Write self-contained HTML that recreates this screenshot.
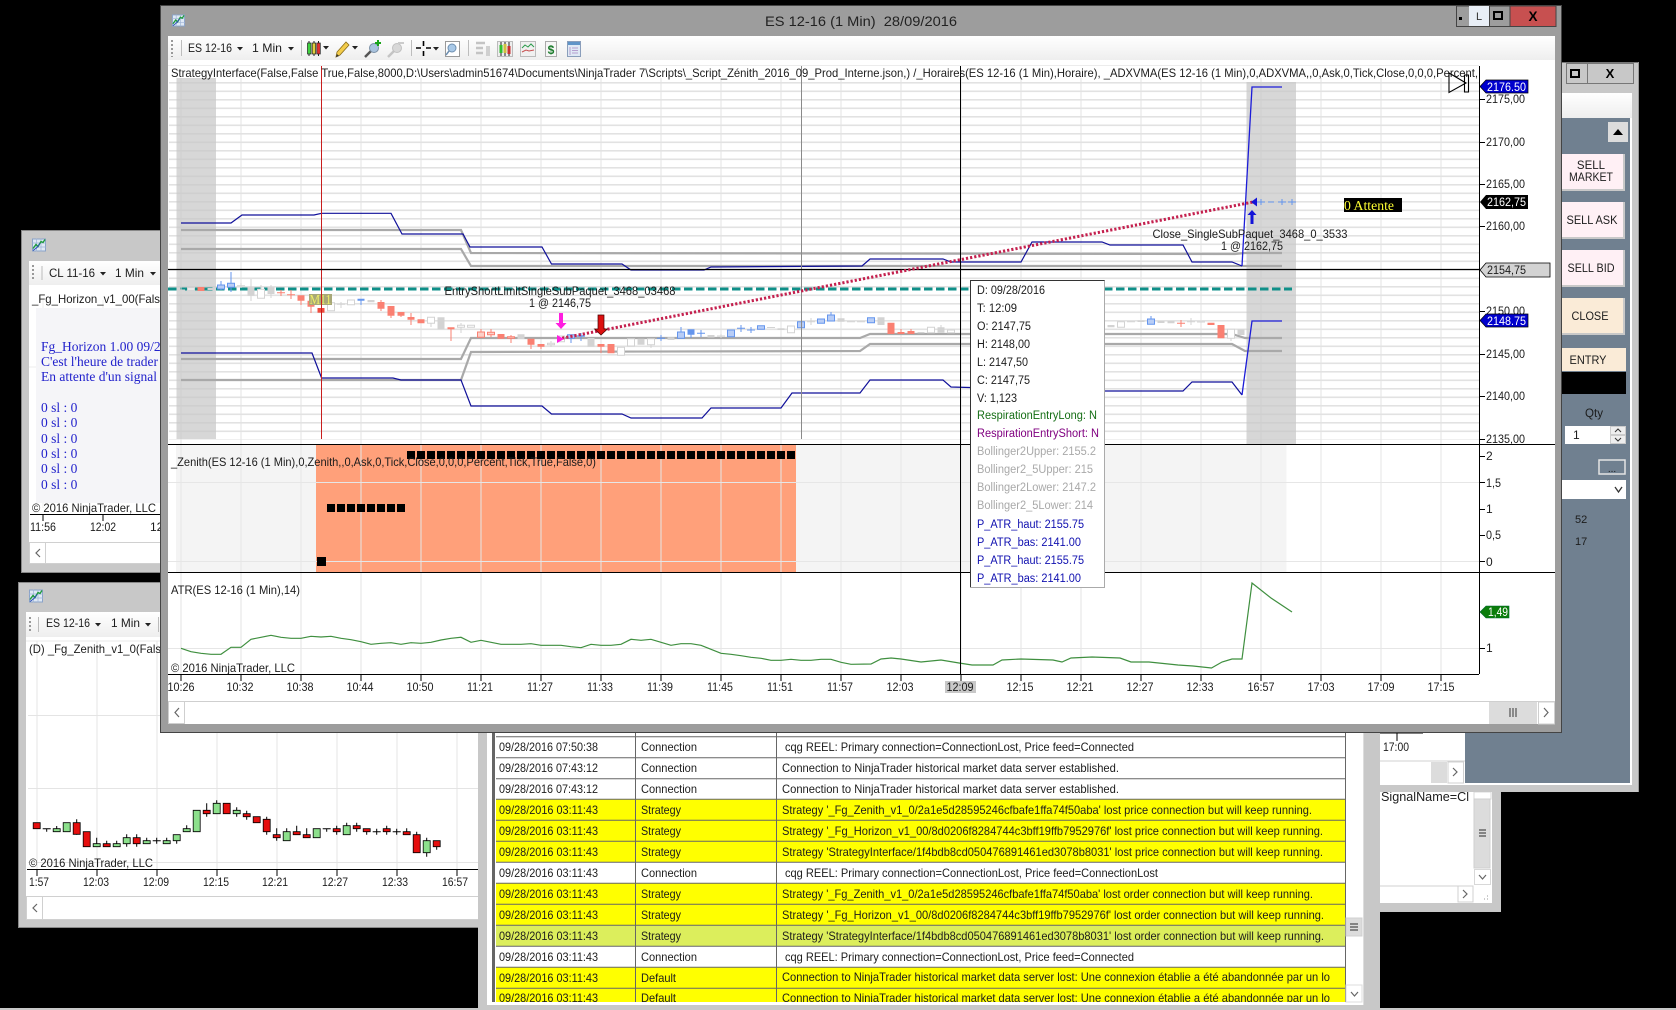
<!DOCTYPE html>
<html lang="fr"><head><meta charset="utf-8"><title>ES 12-16 (1 Min) 28/09/2016</title>
<style>
html,body{margin:0;padding:0;background:#000;width:1676px;height:1010px;overflow:hidden}
svg{display:block;font-family:"Liberation Sans",sans-serif;font-size:12px}
text{fill:#1c1c1c}
.s{font-family:"Liberation Serif",serif;font-size:13.5px;fill:#2222cc}
.t{font-size:11.6px}
.w{fill:#fff}
</style></head><body>
<svg width="1676" height="1010" viewBox="0 0 1676 1010" xmlns="http://www.w3.org/2000/svg">
<defs>
<linearGradient id="tb" x1="0" y1="0" x2="0" y2="1"><stop offset="0" stop-color="#fff"/><stop offset="1" stop-color="#eeeeee"/></linearGradient>
<pattern id="hg" x="0" y="14" width="20" height="8.5" patternUnits="userSpaceOnUse"><rect width="20" height="1.6" fill="#e2e2e2"/></pattern>
<symbol id="ai" viewBox="0 0 14 13"><rect x=".5" y=".5" width="13" height="12" fill="#dfe9f5" stroke="#8aa2c8"/><path d="M0 4.5h14M0 8.5h14M4.5 0v13M9 0v13" stroke="#9db3d6" stroke-width=".7"/><path d="M1 10l3-4 2 2 3-5 2 1 2-3" fill="none" stroke="#1d9b3c" stroke-width="1.4"/><path d="M1 12l4-3 3-4" fill="none" stroke="#2a4fb8" stroke-width="1"/></symbol>
</defs>
<rect width="1676" height="1010" fill="#000"/>
<rect x="0" y="1008" width="1676" height="2" fill="#c8c8c8"/>

<!-- window behind: signal -->
<rect x="1300" y="780" width="201" height="132" fill="#c8c8c8"/>
<rect x="1300" y="790" width="192" height="113" fill="#fff"/>
<text x="1381" y="801" font-size="12.5" textLength="88" lengthAdjust="spacingAndGlyphs">SignalName=Cl</text>
<rect x="1474" y="792" width="17" height="7" fill="#fff" stroke="#d8d8d8"/>
<rect x="1474" y="799" width="16" height="69" fill="#dcdcdc" stroke="#cfcfcf"/>
<path d="M1479 830h7M1479 833h7M1479 836h7" stroke="#666" stroke-width="1.4"/>
<rect x="1474.500" y="869.500" width="16" height="15" fill="#fff" stroke="#d8d8d8"/>
<path d="M1479 875l3.500 4 3.500-4" fill="none" stroke="#666" stroke-width="1.2"/>
<path d="M1300 886h173" stroke="#d0d0d0"/>
<rect x="1458" y="886" width="15" height="16" fill="#fff" stroke="#d0d0d0"/>
<path d="M1463 890l4 4-4 4" fill="none" stroke="#666" stroke-width="1.2"/>
<path d="M1484 899h1M1487 899h1M1487 896h1" stroke="#999"/>

<!-- right window -->
<rect x="1300" y="62" width="339" height="730" fill="#c8c8c8"/>
<rect x="1300" y="62" width="339" height="1" fill="#777"/>
<rect x="1638" y="62" width="1" height="730" fill="#999"/>
<rect x="1566.500" y="63.500" width="21" height="20" fill="#c8c8c8" stroke="#777"/>
<rect x="1587.500" y="63.500" width="46" height="20" fill="#c8c8c8" stroke="#777"/>
<rect x="1571" y="70" width="8" height="7" fill="none" stroke="#000" stroke-width="2"/>
<text x="1610" y="78" text-anchor="middle" font-weight="bold" font-size="13" style="fill:#000">X</text>
<rect x="1561" y="93" width="71" height="25" fill="url(#tb)"/>
<rect x="1300" y="118" width="332" height="667" fill="#fff"/>
<rect x="1465" y="118" width="165" height="665" fill="#708090"/>
<rect x="1608" y="122" width="20" height="20" fill="#dcdcdc"/>
<path d="M1613 135l5-6 5 6z" fill="#000"/>
<g>
<rect x="1555" y="154" width="69" height="36" fill="#fff0f5"/><path d="M1624 154v36H1555" fill="none" stroke="#c8c8c8" stroke-width="2"/>
<rect x="1555" y="202" width="69" height="36" fill="#fff0f5"/><path d="M1624 202v36H1555" fill="none" stroke="#c8c8c8" stroke-width="2"/>
<rect x="1555" y="250" width="69" height="36" fill="#fff0f5"/><path d="M1624 250v36H1555" fill="none" stroke="#c8c8c8" stroke-width="2"/>
<rect x="1555" y="298" width="69" height="36" fill="#faebd7"/><path d="M1624 298v36H1555" fill="none" stroke="#c8c8c8" stroke-width="2"/>
<rect x="1555" y="348" width="71" height="23" fill="#faebd7"/>
<rect x="1555" y="372" width="71" height="22" fill="#000"/>
</g>
<text x="1591" y="169" text-anchor="middle" font-size="11.5">SELL</text>
<text x="1591" y="181" text-anchor="middle" font-size="11.5" textLength="44" lengthAdjust="spacingAndGlyphs">MARKET</text>
<text x="1592" y="224" text-anchor="middle" font-size="11.5" textLength="51" lengthAdjust="spacingAndGlyphs">SELL ASK</text>
<text x="1591" y="272" text-anchor="middle" font-size="11.5" textLength="47" lengthAdjust="spacingAndGlyphs">SELL BID</text>
<text x="1590" y="320" text-anchor="middle" font-size="11.5" textLength="37" lengthAdjust="spacingAndGlyphs">CLOSE</text>
<text x="1588" y="364" text-anchor="middle" font-size="11.5" textLength="37" lengthAdjust="spacingAndGlyphs">ENTRY</text>
<text x="1594" y="417" text-anchor="middle" font-size="11.5" textLength="18" lengthAdjust="spacingAndGlyphs">Qty</text>
<rect x="1565" y="426" width="61" height="18" fill="#fff"/>
<text x="1573" y="439" font-size="12">1</text>
<rect x="1610.500" y="426.500" width="15" height="8" fill="#eee" stroke="#ccc"/>
<rect x="1610.500" y="435.500" width="15" height="8" fill="#eee" stroke="#ccc"/>
<path d="M1615 432l3-3 3 3M1615 438l3 3 3-3" fill="none" stroke="#333"/>
<rect x="1599" y="460" width="26" height="14" fill="none" stroke="#e4e4e4" stroke-width="1.500"/>
<text x="1612" y="472" text-anchor="middle" font-size="10">...</text>
<rect x="1562" y="480" width="64" height="19" fill="#fff"/>
<path d="M1615 487l3.500 5 3.500-5" fill="none" stroke="#333" stroke-width="1.300"/>
<text x="1575" y="523" font-size="11">52</text>
<text x="1575" y="545" font-size="11">17</text>
<text x="1383" y="751" font-size="12" textLength="26" lengthAdjust="spacingAndGlyphs">17:00</text>
<path d="M1397 733v8M1380 733h43" stroke="#000"/>
<path d="M1380 761h85" stroke="#d0d0d0"/>
<rect x="1431" y="762" width="16" height="21" fill="#dcdcdc"/>
<rect x="1448" y="762" width="15.500" height="21" fill="#fff" stroke="#d0d0d0"/>
<path d="M1453 768l4 4-4 4" fill="none" stroke="#666" stroke-width="1.200"/>

<!-- left window 1 -->
<rect x="21.500" y="230.500" width="160" height="342" fill="#c8c8c8" stroke="#888"/>
<use href="#ai" x="32" y="238" width="14" height="14"/>
<rect x="29" y="261" width="150" height="24" fill="url(#tb)"/>
<path d="M33 265v16" stroke="#999" stroke-dasharray="2 2" stroke-width="2"/>
<path d="M42 266v14" stroke="#bbb"/>
<text x="49" y="277" textLength="46" lengthAdjust="spacingAndGlyphs">CL 11-16</text>
<path d="M100 272h6l-3 3.500z" fill="#222"/>
<text x="115" y="277" textLength="29" lengthAdjust="spacingAndGlyphs">1 Min</text>
<path d="M150 272h6l-3 3.500z" fill="#222"/>
<rect x="29" y="285" width="150" height="257" fill="#fff"/>
<path d="M43 300v208M103 300v208M29 367h150" stroke="#ececec"/>
<text x="32" y="303" textLength="128" lengthAdjust="spacingAndGlyphs">_Fg_Horizon_v1_00(Fals</text>
<rect x="36" y="308" width="140" height="195" fill="#f5f5f8"/>
<text class="s" x="41" y="351">Fg_Horizon 1.00 09/2</text>
<text class="s" x="41" y="366">C'est l'heure de trader :</text>
<text class="s" x="41" y="381">En attente d'un signal</text>
<text class="s" x="41" y="412">0 sl : 0</text>
<text class="s" x="41" y="427">0 sl : 0</text>
<text class="s" x="41" y="443">0 sl : 0</text>
<text class="s" x="41" y="458">0 sl : 0</text>
<text class="s" x="41" y="473">0 sl : 0</text>
<text class="s" x="41" y="489">0 sl : 0</text>
<text x="32" y="512" textLength="124" lengthAdjust="spacingAndGlyphs">© 2016 NinjaTrader, LLC</text>
<path d="M30 514.500h150M43 514v7M103 514v7" stroke="#000"/>
<text x="30" y="531" textLength="26" lengthAdjust="spacingAndGlyphs">11:56</text>
<text x="90" y="531" textLength="26" lengthAdjust="spacingAndGlyphs">12:02</text>
<text x="150" y="531">12</text>
<rect x="29.500" y="542.500" width="160" height="21" fill="#fff" stroke="#d0d0d0"/>
<path d="M45.500 542v22" stroke="#d0d0d0"/>
<path d="M40 549l-4 4 4 4" fill="none" stroke="#666" stroke-width="1.200"/>

<!-- left window 2 -->
<rect x="18.500" y="582.500" width="470" height="345" fill="#c8c8c8" stroke="#888"/>
<use href="#ai" x="29" y="589" width="14" height="14"/>
<rect x="26" y="612" width="452" height="25" fill="url(#tb)"/>
<path d="M30 617v16" stroke="#999" stroke-dasharray="2 2" stroke-width="2"/>
<path d="M38.500 617v15M158.500 617v15" stroke="#bbb"/>
<text x="46" y="627" textLength="44" lengthAdjust="spacingAndGlyphs">ES 12-16</text>
<path d="M95 623h6l-3 3.500z" fill="#222"/>
<text x="111" y="627" textLength="29" lengthAdjust="spacingAndGlyphs">1 Min</text>
<path d="M145 623h6l-3 3.500z" fill="#222"/>
<rect x="26" y="637" width="452" height="260" fill="#fff"/>
<path d="M26 641h452" stroke="#e8e8e8"/>
<path d="M37 641v228M97 641v228M157 641v228M217 641v228M277 641v228M337 641v228M397 641v228M457 641v228M28 715.500h450M28 788.500h450M28 862.500h450" stroke="#e4e4e4" stroke-width="1"/>
<text x="29" y="653" textLength="132" lengthAdjust="spacingAndGlyphs">(D) _Fg_Zenith_v1_0(Fals</text>
<path d="M46.700 828.700v3M42.700 828.700h8M56.700 826v3M76.700 819.300v15.400M96.700 837.700v6M106.700 840.700v3.300M116.700 840.700v3.300M126.700 834.300v12.400M136.700 834.300v12.400M146.700 837.700v3.300M156.700 837.700v6M152.700 840.700h8M166.700 837.700v3.300M176.700 840.700v3M186.700 825.300v3.400M206.700 803.300v13.400M216.700 800.300v3M236.700 807.300v9.400M246.700 810.700v9M266.700 816.700v18M276.700 828.300v12.400M286.700 828.300v3.400M296.700 825.700v6M306.700 828.300v6.400M326.700 828.700v3M322.700 828.700h8M336.700 825.700v9M346.700 822.700v3M356.700 822.700v9M366.700 831.700v3M376.700 828.700v6M372.700 831.700h8M386.700 825.700v9M396.700 828.700v6M392.700 831.700h8M406.700 828.300v3.400M416.700 831.700v3M426.700 837.700v19M436.700 846.700v3" stroke="#000" fill="none"/>
<path d="M33.200 822.700h7v6h-7zM73.200 822.700h7v11.600h-7zM83.200 831.700h7v15h-7zM103.200 843.700h7v3h-7zM133.200 837.700h7v6h-7zM203.200 810.300h7v3.400h-7zM223.200 803.300h7v10.400h-7zM243.200 813.700h7v3h-7zM253.200 816.700h7v6h-7zM263.200 819.300h7v12.400h-7zM273.200 834.700h7v3h-7zM293.200 831.700h7v3h-7zM303.200 834.700h7v3h-7zM333.200 828.700h7v3h-7zM353.200 825.700h7v3h-7zM363.200 828.700h7v3h-7zM383.200 828.700h7v3h-7zM403.200 831.700h7v3h-7zM413.200 834.700h7v18h-7zM433.200 840.700h7v6h-7z" fill="#e60e0e" stroke="#000" stroke-width=".8"/>
<path d="M53.200 828.700h7v3h-7zM63.200 822.700h7v9h-7zM93.200 843.700h7v3h-7zM113.200 843.700h7v3h-7zM123.200 837.700h7v6h-7zM143.200 840.700h7v3h-7zM163.200 840.700h7v3h-7zM173.200 834.700h7v6h-7zM183.200 828.700h7v3h-7zM193.200 810.300h7v21.400h-7zM213.200 803.300h7v10.400h-7zM233.200 810.300h7v3.400h-7zM283.200 831.700h7v9h-7zM313.200 828.700h7v9h-7zM343.200 825.700h7v9h-7zM423.200 840.700h7v12h-7z" fill="#8ce08c" stroke="#000" stroke-width=".8"/>
<text x="29" y="867" textLength="124" lengthAdjust="spacingAndGlyphs">© 2016 NinjaTrader, LLC</text>
<path d="M27 869.500h452M37 869v7M97 869v7M157 869v7M217 869v7M277 869v7M337 869v7M397 869v7M457 869v7" stroke="#000"/>
<g font-size="12">
<text x="29" y="886" textLength="20" lengthAdjust="spacingAndGlyphs">1:57</text>
<text x="96" y="886" text-anchor="middle" textLength="26" lengthAdjust="spacingAndGlyphs">12:03</text>
<text x="156" y="886" text-anchor="middle" textLength="26" lengthAdjust="spacingAndGlyphs">12:09</text>
<text x="216" y="886" text-anchor="middle" textLength="26" lengthAdjust="spacingAndGlyphs">12:15</text>
<text x="275" y="886" text-anchor="middle" textLength="26" lengthAdjust="spacingAndGlyphs">12:21</text>
<text x="335" y="886" text-anchor="middle" textLength="26" lengthAdjust="spacingAndGlyphs">12:27</text>
<text x="395" y="886" text-anchor="middle" textLength="26" lengthAdjust="spacingAndGlyphs">12:33</text>
<text x="455" y="886" text-anchor="middle" textLength="26" lengthAdjust="spacingAndGlyphs">16:57</text>
</g>
<rect x="26.500" y="896.500" width="460" height="23" fill="#fff" stroke="#d0d0d0"/>
<path d="M42.500 897v22" stroke="#d0d0d0"/>
<path d="M37 904l-4 4 4 4" fill="none" stroke="#666" stroke-width="1.200"/>

<!-- log window -->
<rect x="478" y="725" width="902" height="283" fill="#c8c8c8"/>
<rect x="487" y="725" width="876" height="280" fill="#fff"/>
<rect x="492" y="725" width="3" height="277" fill="#666"/>
<rect x="1369" y="725" width="11" height="283" fill="#c8c8c8"/>
<rect x="1363" y="725" width="1" height="280" fill="#ddd"/>
<rect x="496" y="799.300" width="849" height="63" fill="#ff0"/>
<rect x="496" y="883.300" width="849" height="42" fill="#ff0"/>
<rect x="496" y="925.300" width="849" height="21" fill="#dcee5c"/>
<rect x="496" y="967.300" width="849" height="35" fill="#ff0"/>
<path d="M496 736.700H1345M496 757.700H1345M496 778.700H1345M496 799.300H1345M496 820.300H1345M496 841.300H1345M496 862.300H1345M496 883.300H1345M496 904.300H1345M496 925.300H1345M496 946.300H1345M496 967.300H1345M496 988.300H1345M635.500 732V1002M776.500 732V1002M1345.500 732V1002" stroke="#666" stroke-width="1" fill="none"/>
<g class="t" style="font-size:11.6px">
<text x="499" y="751" textLength="99" lengthAdjust="spacingAndGlyphs">09/28/2016 07:50:38</text><text x="641" y="751" textLength="56" lengthAdjust="spacingAndGlyphs">Connection</text><text x="785" y="751" textLength="349" lengthAdjust="spacingAndGlyphs">cqg REEL: Primary connection=ConnectionLost, Price feed=Connected</text>
<text x="499" y="772" textLength="99" lengthAdjust="spacingAndGlyphs">09/28/2016 07:43:12</text><text x="641" y="772" textLength="56" lengthAdjust="spacingAndGlyphs">Connection</text><text x="782" y="772" textLength="337" lengthAdjust="spacingAndGlyphs">Connection to NinjaTrader historical market data server established.</text>
<text x="499" y="793" textLength="99" lengthAdjust="spacingAndGlyphs">09/28/2016 07:43:12</text><text x="641" y="793" textLength="56" lengthAdjust="spacingAndGlyphs">Connection</text><text x="782" y="793" textLength="337" lengthAdjust="spacingAndGlyphs">Connection to NinjaTrader historical market data server established.</text>
<text x="499" y="814" textLength="99" lengthAdjust="spacingAndGlyphs">09/28/2016 03:11:43</text><text x="641" y="814" textLength="40" lengthAdjust="spacingAndGlyphs">Strategy</text><text x="782" y="814" textLength="530" lengthAdjust="spacingAndGlyphs">Strategy '_Fg_Zenith_v1_0/2a1e5d28595246cfbafe1ffa74f50aba' lost price connection but will keep running.</text>
<text x="499" y="835" textLength="99" lengthAdjust="spacingAndGlyphs">09/28/2016 03:11:43</text><text x="641" y="835" textLength="40" lengthAdjust="spacingAndGlyphs">Strategy</text><text x="782" y="835" textLength="541" lengthAdjust="spacingAndGlyphs">Strategy '_Fg_Horizon_v1_00/8d0206f8284744c3bff19ffb7952976f' lost price connection but will keep running.</text>
<text x="499" y="856" textLength="99" lengthAdjust="spacingAndGlyphs">09/28/2016 03:11:43</text><text x="641" y="856" textLength="40" lengthAdjust="spacingAndGlyphs">Strategy</text><text x="782" y="856" textLength="541" lengthAdjust="spacingAndGlyphs">Strategy 'StrategyInterface/1f4bdb8cd050476891461ed3078b8031' lost price connection but will keep running.</text>
<text x="499" y="877" textLength="99" lengthAdjust="spacingAndGlyphs">09/28/2016 03:11:43</text><text x="641" y="877" textLength="56" lengthAdjust="spacingAndGlyphs">Connection</text><text x="785" y="877" textLength="373" lengthAdjust="spacingAndGlyphs">cqg REEL: Primary connection=ConnectionLost, Price feed=ConnectionLost</text>
<text x="499" y="898" textLength="99" lengthAdjust="spacingAndGlyphs">09/28/2016 03:11:43</text><text x="641" y="898" textLength="40" lengthAdjust="spacingAndGlyphs">Strategy</text><text x="782" y="898" textLength="531" lengthAdjust="spacingAndGlyphs">Strategy '_Fg_Zenith_v1_0/2a1e5d28595246cfbafe1ffa74f50aba' lost order connection but will keep running.</text>
<text x="499" y="919" textLength="99" lengthAdjust="spacingAndGlyphs">09/28/2016 03:11:43</text><text x="641" y="919" textLength="40" lengthAdjust="spacingAndGlyphs">Strategy</text><text x="782" y="919" textLength="542" lengthAdjust="spacingAndGlyphs">Strategy '_Fg_Horizon_v1_00/8d0206f8284744c3bff19ffb7952976f' lost order connection but will keep running.</text>
<text x="499" y="940" textLength="99" lengthAdjust="spacingAndGlyphs">09/28/2016 03:11:43</text><text x="641" y="940" textLength="40" lengthAdjust="spacingAndGlyphs">Strategy</text><text x="782" y="940" textLength="542" lengthAdjust="spacingAndGlyphs">Strategy 'StrategyInterface/1f4bdb8cd050476891461ed3078b8031' lost order connection but will keep running.</text>
<text x="499" y="961" textLength="99" lengthAdjust="spacingAndGlyphs">09/28/2016 03:11:43</text><text x="641" y="961" textLength="56" lengthAdjust="spacingAndGlyphs">Connection</text><text x="785" y="961" textLength="349" lengthAdjust="spacingAndGlyphs">cqg REEL: Primary connection=ConnectionLost, Price feed=Connected</text>
<text x="499" y="982" textLength="99" lengthAdjust="spacingAndGlyphs">09/28/2016 03:11:43</text><text x="641" y="982" textLength="35" lengthAdjust="spacingAndGlyphs">Default</text><text x="782" y="981" textLength="548" lengthAdjust="spacingAndGlyphs">Connection to NinjaTrader historical market data server lost: Une connexion établie a été abandonnée par un lo</text>
<text x="499" y="1002" textLength="99" lengthAdjust="spacingAndGlyphs">09/28/2016 03:11:43</text><text x="641" y="1002" textLength="35" lengthAdjust="spacingAndGlyphs">Default</text><text x="782" y="1002" textLength="548" lengthAdjust="spacingAndGlyphs">Connection to NinjaTrader historical market data server lost: Une connexion établie a été abandonnée par un lo</text>
</g>
<rect x="487" y="1002" width="876" height="6" fill="#fff"/>
<rect x="478" y="1005" width="902" height="3" fill="#c8c8c8"/>
<rect x="1346" y="918" width="16" height="18" fill="#dcdcdc" stroke="#d0d0d0"/>
<path d="M1350 924h8M1350 927h8M1350 930h8" stroke="#666" stroke-width="1.400"/>
<rect x="1346" y="985" width="16" height="17" fill="#fff" stroke="#ddd"/>
<path d="M1351 992l3.500 4 3.500-4" fill="none" stroke="#666" stroke-width="1.200"/>

<!-- main window -->
<rect x="160.500" y="5.500" width="1401" height="727" fill="#9d9d9d" stroke="#444"/>
<use href="#ai" x="172" y="14" width="13" height="13"/>
<text x="861" y="26" text-anchor="middle" font-size="14" style="fill:#222;white-space:pre" textLength="192" lengthAdjust="spacingAndGlyphs" xml:space="preserve">ES 12-16 (1 Min)  28/09/2016</text>
<rect x="1456.500" y="6" width="32" height="20.500" fill="#9d9d9d" stroke="#444"/>
<rect x="1459" y="17" width="3" height="3" fill="#000"/>
<rect x="1469" y="6" width="20" height="20" fill="#e8eef6"/>
<text x="1479" y="20" text-anchor="middle" font-size="11" style="fill:#333">L</text>
<rect x="1489.500" y="6" width="20.500" height="20.500" fill="#9d9d9d" stroke="#444"/>
<rect x="1494" y="12" width="8" height="7" fill="none" stroke="#000" stroke-width="2"/>
<rect x="1510" y="6" width="46" height="20.500" fill="#c75050" stroke="#444"/>
<text x="1533" y="21" text-anchor="middle" font-weight="bold" font-size="13.500" style="fill:#000">X</text>

<rect x="168" y="36" width="1387" height="24.500" fill="url(#tb)"/>
<rect x="168" y="60" width="1387" height="664" fill="#fff"/>
<path d="M172 40v17" stroke="#999" stroke-dasharray="2 2" stroke-width="2"/>
<path d="M181.500 40v16M301.500 40v16M411.500 40v16M468.500 40v16" stroke="#bdbdbd"/>
<text x="188" y="52" textLength="44" lengthAdjust="spacingAndGlyphs">ES 12-16</text>
<path d="M237 47h6l-3 3.500z" fill="#222"/>
<text x="252" y="52" textLength="30" lengthAdjust="spacingAndGlyphs">1 Min</text>
<path d="M288 47h6l-3 3.500z" fill="#222"/>
<!-- candles icon -->
<path d="M309 41v15M314 41v15M318.500 41v15" stroke="#222"/>
<rect x="307.500" y="43" width="3.500" height="11" fill="#3fd23f" stroke="#222" stroke-width=".7"/>
<rect x="312.200" y="43" width="3.500" height="11" fill="#e0d040" stroke="#222" stroke-width=".7"/>
<rect x="316.800" y="43" width="3.500" height="11" fill="#e03030" stroke="#222" stroke-width=".7"/>
<path d="M323 46h6l-3 3.500z" fill="#222"/>
<!-- pencil -->
<path d="M336 57l1-5 9-10 3 3-9 10z" fill="#f3cc4a" stroke="#8a6d1a" stroke-width=".8"/>
<path d="M336 57l1-3 2 2z" fill="#333"/>
<path d="M352 46h6l-3 3.500z" fill="#222"/>
<!-- zoom plus -->
<path d="M365 57l6-6" stroke="#555" stroke-width="2.500"/>
<circle cx="374" cy="48" r="4.500" fill="#a9c3de" stroke="#7a8fa6"/>
<path d="M378 40v6M375 43h6" stroke="#1aa51a" stroke-width="2"/>
<!-- zoom minus -->
<path d="M388 57l6-6" stroke="#c4c4c4" stroke-width="2.500"/>
<circle cx="397" cy="48" r="4.500" fill="#d8d8d8" stroke="#c0c0c0"/>
<path d="M398 43h6" stroke="#ccc" stroke-width="2"/>
<!-- crosshair -->
<path d="M416 48h5M426 48h5M423.500 41v5M423.500 51v5" stroke="#000" stroke-width="1.600"/>
<path d="M433 47h6l-3 3.500z" fill="#222"/>
<!-- doc magnifier -->
<rect x="445.500" y="41.500" width="14" height="15" fill="#fff" stroke="#9a9a9a"/>
<circle cx="452" cy="48" r="4" fill="#a9c9e8" stroke="#6e8fb0"/>
<path d="M449 51l-3 4" stroke="#6e8fb0" stroke-width="1.500"/>
<!-- bars -->
<path d="M476 43h9M476 48h7M476 53h7" stroke="#c4c4c4" stroke-width="2.500"/>
<rect x="486" y="46" width="4" height="10" fill="#d0d0d0"/>
<rect x="497.500" y="41.500" width="15" height="15" fill="#eee" stroke="#bbb"/>
<path d="M501 42v14M505 42v14M509 42v14" stroke="#222"/>
<rect x="499.500" y="45" width="3" height="8" fill="#2fbf2f"/><rect x="503.500" y="44" width="3" height="9" fill="#d0c040"/><rect x="507.500" y="46" width="3" height="8" fill="#c83030"/>
<rect x="520.500" y="41.500" width="15" height="15" fill="#f0f0f0" stroke="#bbb"/>
<path d="M522 48l3-3 3 2 3-3 3 3" fill="none" stroke="#2a9a4a"/><path d="M522 52l4-2 3 1 5-1" fill="none" stroke="#c85050"/>
<rect x="545.500" y="41.500" width="11" height="15" fill="#f6f6f6" stroke="#aaa"/>
<text x="551" y="54" text-anchor="middle" font-size="12" font-weight="bold" style="fill:#1a7a2a">$</text>
<rect x="567.500" y="41.500" width="13" height="15" fill="#dfe9f5" stroke="#8a9ebb"/>
<rect x="568" y="42" width="12" height="3" fill="#5f94c8"/>
<path d="M570 47v8M572 48h6M572 50.500h6M572 53h6" stroke="#b5a0d0"/>

<!-- main chart -->
<path d="M168 65.500H1479" stroke="#ececec"/>
<rect x="169" y="82" width="1310" height="357.500" fill="url(#hg)"/>
<path d="M181 78V674M241 78V674M301 78V674M361 78V674M421 78V674M481 78V674M541 78V674M601 78V674M661 78V674M721 78V674M781 78V674M841 78V674M901 78V674M961 78V674M1021 78V674M1081 78V674M1141 78V674M1201 78V674M1261 78V674M1321 78V674M1381 78V674M1441 78V674" stroke="#e3e3e3"/>
<rect x="176.500" y="78" width="39.500" height="361" fill="#c8c8c8" opacity=".72"/>
<rect x="1246.500" y="82" width="49.500" height="362" fill="#c8c8c8" opacity=".72"/>

<!-- zenith panel -->
<rect x="168" y="445" width="1311" height="127" fill="#fff"/>
<rect x="176" y="445" width="1110.500" height="127" fill="#f4f4f4"/>
<rect x="316" y="445" width="480" height="127" fill="#ffa07a"/>
<path d="M181 445V572M241 445V572M301 445V572M361 445V572M421 445V572M481 445V572M541 445V572M601 445V572M661 445V572M721 445V572M781 445V572M841 445V572M901 445V572M961 445V572M1021 445V572M1081 445V572M1141 445V572M1201 445V572M1261 445V572M1321 445V572M1381 445V572M1441 445V572" stroke="#e6e6e6"/>
<path d="M168 482.500H1479M168 561.500H1479" stroke="#e6e6e6"/>
<path d="M317 557h9v9h-9zM327 504h8v8h-8zM337 504h8v8h-8zM347 504h8v8h-8zM357 504h8v8h-8zM367 504h8v8h-8zM377 504h8v8h-8zM387 504h8v8h-8zM397 504h8v8h-8z" fill="#000"/>
<path d="M407 451h8v8h-8zM417 451h8v8h-8zM427 451h8v8h-8zM437 451h8v8h-8zM447 451h8v8h-8zM457 451h8v8h-8zM467 451h8v8h-8zM477 451h8v8h-8zM487 451h8v8h-8zM497 451h8v8h-8zM507 451h8v8h-8zM517 451h8v8h-8zM527 451h8v8h-8zM537 451h8v8h-8zM547 451h8v8h-8zM557 451h8v8h-8zM567 451h8v8h-8zM577 451h8v8h-8zM587 451h8v8h-8zM597 451h8v8h-8zM607 451h8v8h-8zM617 451h8v8h-8zM627 451h8v8h-8zM637 451h8v8h-8zM647 451h8v8h-8zM657 451h8v8h-8zM667 451h8v8h-8zM677 451h8v8h-8zM687 451h8v8h-8zM697 451h8v8h-8zM707 451h8v8h-8zM717 451h8v8h-8zM727 451h8v8h-8zM737 451h8v8h-8zM747 451h8v8h-8zM757 451h8v8h-8zM767 451h8v8h-8zM777 451h8v8h-8zM787 451h8v8h-8z" fill="#000"/>
<text x="171" y="466" textLength="425" lengthAdjust="spacingAndGlyphs">_Zenith(ES 12-16 (1 Min),0,Zenith,,0,Ask,0,Tick,Close,0,0,0,Percent,Tick,True,False,0)</text>

<!-- ATR grid line & series -->
<path d="M168 648.500H1479" stroke="#e6e6e6"/>
<text x="171" y="594" textLength="129" lengthAdjust="spacingAndGlyphs">ATR(ES 12-16 (1 Min),14)</text>
<polyline fill="none" stroke="#3f8f3f" stroke-width="1.200" points="181,648.300 191,651.700 201,653.300 211,654.300 221,654.300 231,647.300 241,647.300 251,639.300 261,637.300 271,635.300 281,637.300 291,638.300 301,638.300 311,636.300 321,637 331,636.300 341,638.300 351,639.700 361,641.700 371,644.300 381,643.300 391,642.700 401,644.300 411,642.700 421,643.300 431,642.300 441,640 451,638.300 461,637.300 471,642.300 481,640.300 491,642.300 501,644.300 511,644.300 521,644.300 531,643.700 541,645.300 551,645.300 561,645.300 571,646.700 581,647.700 591,644.300 601,645.300 611,645.300 621,644.300 631,639.300 641,640.300 651,639.300 661,642.300 671,645.300 681,643.700 691,643.700 701,645.300 711,649.300 721,653.300 731,654.300 741,655.700 751,657.300 761,658.300 771,660.300 781,660.300 791,659.300 801,660.300 811,660.300 821,659.300 831,659.300 841,662.300 851,664.300 871,664 881,659 891,658 901,659 921,662 941,660 959,663 972,665 993,665 1002,660 1021,659 1053,660 1062,662 1071,658 1092,657 1120,658 1131,662 1149,662 1178,665 1193,666 1211.500,668 1222,662 1232,659 1242,659 1252,583 1271,598 1292,612"/>

<!-- bollinger bands -->
<g fill="none" stroke="#a9a9a9" stroke-width="2.200">
<polyline points="181,230 461,230 471,253 1235,254 1245,253 1282,253"/>
<polyline points="181,249 461,249 471,266 1282,266"/>
<polyline points="181,359 461,359 471,338 860,338 870,334 1232,334 1245,338 1282,338"/>
<polyline points="181,380 461,380 471,352 860,351 870,344 1232,344 1245,351 1282,351"/>
</g>

<!-- candles -->
<path d="M168 289H1292" stroke="#0f8f88" stroke-width="3" stroke-dasharray="8.500 3.500" fill="none"/>
<path d="M181 287v7M177 290h8M241 283v5M237 285.700h8M251 279v22M261 285v4M271 285v13M341 302v6M337 304.300h8M461 323v10M431 323v4M551 341v6M547 344h8M651 344v4M721 334v4M717 336h8M767 327.500h8M807 321.700h8M811 318v7M847 321.700h8M857 321.700h8M941 325v3M1127 321.700h8M1187 321.700h8M1191 318v7M1197 322h8M1231 338v3" stroke="#d3d3d3" fill="none"/>
<path d="M207.500 288h7v2h-7zM247.500 287.300h7v8.400h-7zM267.500 287.300h7v6.700h-7zM367.500 300h7v2.300h-7zM437.500 317.300h7v12h-7zM517.500 334.300h7v4.700h-7zM587.500 338h7v8.700h-7zM637.500 338.700h7v6h-7zM667.500 337.300h7v2.700h-7zM707.500 335h7v2.500h-7zM777.500 328.300h7v1.700h-7zM837.500 318.300h7v3.400h-7zM877.500 317.300h7v7.700h-7zM917.500 332h7v1.300h-7zM937.500 327.300h7v5.400h-7zM1107.500 325h7v2.300h-7zM1137.500 320.500h7v1.500h-7zM1157.500 321h7v2h-7zM1167.500 321h7v2.300h-7zM1237.500 329.300h7v5.700h-7z" fill="#d3d3d3"/>
<path d="M187.500 288h7v2h-7zM257.500 289.300h7v9h-7zM327.500 302.700h7v8h-7zM347.500 300h7v4.700h-7zM427.500 317.300h7v6h-7zM457.500 325.300h7v2h-7zM467.500 325.300h7v2h-7zM547.500 343.300h7v1.400h-7zM557.500 336h7v5.700h-7zM617.500 347.300h7v8h-7zM627.500 338.700h7v7.300h-7zM647.500 338.700h7v6h-7zM787.500 326h7v6.700h-7zM927.500 327.300h7v5.400h-7zM947.500 330h7v2.700h-7zM1117.500 321.700h7v5.600h-7zM1227.500 329.300h7v9h-7z" fill="#fff" stroke="#d3d3d3"/>
<path d="M301 300v5M311 306v7M381 300v11M391 315v3M401 315v2M411 313v12M451 329v12M531 344v5M541 346v3M601 346v7M281 290v6M277 292.700h8M291 290v9M287 294.700h8M901 329v3M911 329v2M1181 320v7M1177 323.300h8M481 329v9M491 329v8M511 335v8" stroke="#fa8072" fill="none"/>
<path d="M197.500 287h7v4h-7zM297.500 295.300h7v5.400h-7zM307.500 300.700h7v6h-7zM377.500 302h7v6.700h-7zM387.500 306h7v9.700h-7zM397.500 312h7v3.700h-7zM407.500 317h7v2.700h-7zM417.500 319.300h7v4h-7zM447.500 327.300h7v2h-7zM497.500 334h7v4.700h-7zM527.500 338.700h7v6h-7zM537.500 344h7v2.700h-7zM597.500 344h7v2.700h-7zM607.500 344h7v9.300h-7zM887.500 322.700h7v11.300h-7zM897.500 332h7v2h-7zM907.500 331h7v3h-7zM1207.500 322.700h7v2.300h-7zM1217.500 325h7v13.300h-7z" fill="#fa8072"/>
<rect x="317.500" y="308" width="7" height="4.700" fill="#f04b3c"/>
<path d="M477.500 332h7v5.300h-7zM487.500 332.300h7v2.400h-7zM507.500 336.700h7v1.600h-7z" fill="#fbd0c8" stroke="#fa8072"/>
<path d="M221 281v9M231 272v20M361 300v5M571 338v5M581 333v8M577 336h8M657 338.300h8M661 335v6M681 327v5M691 334v4M697 333.300h8M701 330v7M737 328.300h8M741 325v7M747 330h8M751 327v6M831 312v3M1151 316v3M1257 202h8M1261 199v6M1268 202h6M1278 202h8M1282 199v6M1288 202h8M1292 199v6" stroke="#6495ed" fill="none"/>
<path d="M217.500 285h7v4h-7zM227.500 283.300h7v4h-7zM567.500 334.700h7v3.600h-7zM677.500 332h7v6.300h-7zM727.500 330h7v6.700h-7zM757.500 325.700h7v3.600h-7zM797.500 321.700h7v6h-7zM817.500 319h7v4.300h-7zM827.500 315h7v6h-7zM867.500 317.700h7v5h-7zM1147.500 319h7v5.300h-7z" fill="#b8cdf6" stroke="#6495ed"/>
<path d="M357.500 298.700h7v2h-7zM577.500 335.300h7v1.400h-7zM687.500 329.300h7v5.400h-7z" fill="#6495ed"/>
<rect x="309" y="294" width="23" height="11" fill="#a8a878"/>
<text x="320.500" y="304" text-anchor="middle" font-size="13.500" style="font-family:'Liberation Serif',serif;fill:#eeee66" textLength="22" lengthAdjust="spacingAndGlyphs">M11</text>

<!-- blue lines -->
<g fill="none" stroke="#10109a" stroke-width="1.200">
<polyline points="181,223 231,223 242,215 314,215 321.600,213.300 391,213.300 402,234 463,234 470,247 542,247 551.500,264 622,264 631,270 704,270 711,267 862,266 870,259 943,259 951,262 1021,262 1032,242 1102,242 1110,245 1183,245 1192,262 1232,262 1242,266"/>
<polyline points="181,353 312,353 321.600,378 393,378 401,380 461,380 471,406 542,406 551.500,414 622,414 631,418 702,418 711,408 781,408 792,393 860,393 870,380 943,380 951,387 1105,391 1183,391 1192,382 1232,382 1242,395"/>
</g>
<polyline fill="none" stroke="#1c1cd8" stroke-width="1.300" points="1242,266 1252,87 1282,87"/>
<polyline fill="none" stroke="#1c1cd8" stroke-width="1.300" points="1242,395 1252,321 1282,321"/>

<!-- vertical lines -->
<path d="M321.500 66V439" stroke="#c81e1e"/>
<path d="M801.500 66V439" stroke="#8a8a8a"/>
<path d="M168 269.500H1479" stroke="#000" stroke-width="1.300"/>
<path d="M960.500 66V674" stroke="#000"/>

<!-- dotted entry line & markers -->
<path d="M558 339L1253 202" stroke="#c4204e" stroke-width="3" stroke-dasharray="2.200 2" fill="none"/>
<path d="M559 313h4v10h3.500l-5.500 6-5.500-6h3.500z" fill="#ff1ee0"/>
<path d="M598 315h6v14h3.500l-6.500 6-6.500-6h3.500z" fill="#dc0f0f" stroke="#400" stroke-width=".7"/>
<path d="M557 335l7 4-7 4z" fill="#ff1ee0"/>
<path d="M1250.500 215v9h3v-9h3l-4.500-5-4.500 5z" fill="#1414d8"/>
<path d="M1251 202l6-4.500v9z" fill="#1414d8"/>

<text x="560" y="295" text-anchor="middle" textLength="231" lengthAdjust="spacingAndGlyphs">EntryShortLimitSingleSubPaquet_3468_03468</text>
<text x="560" y="307" text-anchor="middle" textLength="62" lengthAdjust="spacingAndGlyphs">1 @ 2146,75</text>
<text x="1250" y="238" text-anchor="middle" textLength="195" lengthAdjust="spacingAndGlyphs">Close_SingleSubPaquet_3468_0_3533</text>
<text x="1252" y="250" text-anchor="middle" textLength="62" lengthAdjust="spacingAndGlyphs">1 @ 2162,75</text>

<rect x="1344" y="198" width="58" height="14" fill="#000"/>
<text x="1344" y="210" style="font-family:'Liberation Serif',serif;fill:#ffff33" font-size="13.500" textLength="50" lengthAdjust="spacingAndGlyphs">0 Attente</text>

<text x="171" y="77" textLength="1307" lengthAdjust="spacingAndGlyphs">StrategyInterface(False,False True,False,8000,D:\Users\admin51674\Documents\NinjaTrader 7\Scripts\_Script_Zénith_2016_09_Prod_Interne.json,) /_Horaires(ES 12-16 (1 Min),Horaire), _ADXVMA(ES 12-16 (1 Min),0,ADXVMA,,0,Ask,0,Tick,Close,0,0,0,Percent,</text>
<path d="M1449 73l17 10-17 9.500zM1464.500 75v17h4V75z" fill="none" stroke="#000" stroke-width="1.100"/>

<!-- borders/panels -->
<path d="M168 444.500H1555M168 572.500H1555M168 674.500H1479M1479.500 66V674" stroke="#000" stroke-width="1"/>

<!-- tooltip -->
<rect x="970.500" y="280.500" width="134" height="307" fill="#fff" stroke="#aaa"/>
<path d="M970.500 587V280.500H1104.500" fill="none" stroke="#333"/>
<g font-size="11.500">
<text x="977" y="294" textLength="68" lengthAdjust="spacingAndGlyphs">D: 09/28/2016</text>
<text x="977" y="312" textLength="40" lengthAdjust="spacingAndGlyphs">T: 12:09</text>
<text x="977" y="330" textLength="54" lengthAdjust="spacingAndGlyphs">O: 2147,75</text>
<text x="977" y="348" textLength="53" lengthAdjust="spacingAndGlyphs">H: 2148,00</text>
<text x="977" y="366" textLength="51" lengthAdjust="spacingAndGlyphs">L: 2147,50</text>
<text x="977" y="384" textLength="53" lengthAdjust="spacingAndGlyphs">C: 2147,75</text>
<text x="977" y="402" textLength="40" lengthAdjust="spacingAndGlyphs">V: 1,123</text>
<text x="977" y="419" style="fill:#156e15" textLength="120" lengthAdjust="spacingAndGlyphs">RespirationEntryLong: N</text>
<text x="977" y="437" style="fill:#800080" textLength="122" lengthAdjust="spacingAndGlyphs">RespirationEntryShort: N</text>
<text x="977" y="455" style="fill:#a9a9a9" textLength="119" lengthAdjust="spacingAndGlyphs">Bollinger2Upper: 2155.2</text>
<text x="977" y="473" style="fill:#a9a9a9" textLength="116" lengthAdjust="spacingAndGlyphs">Bollinger2_5Upper: 215</text>
<text x="977" y="491" style="fill:#a9a9a9" textLength="119" lengthAdjust="spacingAndGlyphs">Bollinger2Lower: 2147.2</text>
<text x="977" y="509" style="fill:#a9a9a9" textLength="116" lengthAdjust="spacingAndGlyphs">Bollinger2_5Lower: 214</text>
<text x="977" y="528" style="fill:#1010b0" textLength="107" lengthAdjust="spacingAndGlyphs">P_ATR_haut: 2155.75</text>
<text x="977" y="546" style="fill:#1010b0" textLength="104" lengthAdjust="spacingAndGlyphs">P_ATR_bas: 2141.00</text>
<text x="977" y="564" style="fill:#1010b0" textLength="107" lengthAdjust="spacingAndGlyphs">P_ATR_haut: 2155.75</text>
<text x="977" y="582" style="fill:#1010b0" textLength="104" lengthAdjust="spacingAndGlyphs">P_ATR_bas: 2141.00</text>
</g>

<!-- right axis -->
<path d="M1479 99.500h6M1479 142.500h6M1479 184.500h6M1479 226.500h6M1479 311.500h6M1479 354.500h6M1479 396.500h6M1479 439.500h6M1479 456.500h6M1479 482.500h6M1479 509.500h6M1479 535.500h6M1479 561.500h6M1479 648.500h6" stroke="#000"/>
<g>
<text x="1486" y="103" textLength="39" lengthAdjust="spacingAndGlyphs">2175,00</text>
<text x="1486" y="146" textLength="39" lengthAdjust="spacingAndGlyphs">2170,00</text>
<text x="1486" y="188" textLength="39" lengthAdjust="spacingAndGlyphs">2165,00</text>
<text x="1486" y="230" textLength="39" lengthAdjust="spacingAndGlyphs">2160,00</text>
<text x="1486" y="315" textLength="39" lengthAdjust="spacingAndGlyphs">2150,00</text>
<text x="1486" y="358" textLength="39" lengthAdjust="spacingAndGlyphs">2145,00</text>
<text x="1486" y="400" textLength="39" lengthAdjust="spacingAndGlyphs">2140,00</text>
<text x="1486" y="443" textLength="39" lengthAdjust="spacingAndGlyphs">2135,00</text>
<text x="1486" y="460">2</text>
<text x="1486" y="487" textLength="15" lengthAdjust="spacingAndGlyphs">1,5</text>
<text x="1486" y="513">1</text>
<text x="1486" y="539" textLength="15" lengthAdjust="spacingAndGlyphs">0,5</text>
<text x="1486" y="566">0</text>
<text x="1486" y="652">1</text>
</g>
<path d="M1480 86.500l6-6.500h42v13h-42z" fill="#0000cd" stroke="#000" stroke-width=".7"/>
<text class="w" x="1487" y="91" style="fill:#fff" textLength="39" lengthAdjust="spacingAndGlyphs">2176.50</text>
<path d="M1480 202l6-7h42v14h-42z" fill="#000"/>
<text x="1487" y="206" style="fill:#fff" textLength="39" lengthAdjust="spacingAndGlyphs">2162,75</text>
<path d="M1480 270l6-7h64v14h-64z" fill="#d3d3d3" stroke="#000" stroke-width=".8"/>
<text x="1487" y="274" textLength="39" lengthAdjust="spacingAndGlyphs">2154,75</text>
<path d="M1480 320.500l6-6.500h42v13h-42z" fill="#0000cd" stroke="#000" stroke-width=".7"/>
<text x="1487" y="325" style="fill:#fff" textLength="39" lengthAdjust="spacingAndGlyphs">2148.75</text>
<path d="M1480 612l6-6h23v12h-23z" fill="#0b7d0b" stroke="#063" stroke-width=".6"/>
<text x="1488" y="616" style="fill:#fff" textLength="20" lengthAdjust="spacingAndGlyphs">1,49</text>

<!-- time axis -->
<path d="M181 674v7M241 674v7M301 674v7M361 674v7M421 674v7M481 674v7M541 674v7M601 674v7M661 674v7M721 674v7M781 674v7M841 674v7M901 674v7M961 674v7M1021 674v7M1081 674v7M1141 674v7M1201 674v7M1261 674v7M1321 674v7M1381 674v7M1441 674v7" stroke="#000"/>
<rect x="945" y="681" width="31" height="12" fill="#c8c8c8"/>
<g font-size="11.800">
<text x="181" y="691" text-anchor="middle" textLength="27" lengthAdjust="spacingAndGlyphs">10:26</text>
<text x="240" y="691" text-anchor="middle" textLength="27" lengthAdjust="spacingAndGlyphs">10:32</text>
<text x="300" y="691" text-anchor="middle" textLength="27" lengthAdjust="spacingAndGlyphs">10:38</text>
<text x="360" y="691" text-anchor="middle" textLength="27" lengthAdjust="spacingAndGlyphs">10:44</text>
<text x="420" y="691" text-anchor="middle" textLength="27" lengthAdjust="spacingAndGlyphs">10:50</text>
<text x="480" y="691" text-anchor="middle" textLength="26" lengthAdjust="spacingAndGlyphs">11:21</text>
<text x="540" y="691" text-anchor="middle" textLength="26" lengthAdjust="spacingAndGlyphs">11:27</text>
<text x="600" y="691" text-anchor="middle" textLength="26" lengthAdjust="spacingAndGlyphs">11:33</text>
<text x="660" y="691" text-anchor="middle" textLength="26" lengthAdjust="spacingAndGlyphs">11:39</text>
<text x="720" y="691" text-anchor="middle" textLength="26" lengthAdjust="spacingAndGlyphs">11:45</text>
<text x="780" y="691" text-anchor="middle" textLength="26" lengthAdjust="spacingAndGlyphs">11:51</text>
<text x="840" y="691" text-anchor="middle" textLength="26" lengthAdjust="spacingAndGlyphs">11:57</text>
<text x="900" y="691" text-anchor="middle" textLength="27" lengthAdjust="spacingAndGlyphs">12:03</text>
<text x="960" y="691" text-anchor="middle" textLength="27" lengthAdjust="spacingAndGlyphs">12:09</text>
<text x="1020" y="691" text-anchor="middle" textLength="27" lengthAdjust="spacingAndGlyphs">12:15</text>
<text x="1080" y="691" text-anchor="middle" textLength="27" lengthAdjust="spacingAndGlyphs">12:21</text>
<text x="1140" y="691" text-anchor="middle" textLength="27" lengthAdjust="spacingAndGlyphs">12:27</text>
<text x="1200" y="691" text-anchor="middle" textLength="27" lengthAdjust="spacingAndGlyphs">12:33</text>
<text x="1261" y="691" text-anchor="middle" textLength="27" lengthAdjust="spacingAndGlyphs">16:57</text>
<text x="1321" y="691" text-anchor="middle" textLength="27" lengthAdjust="spacingAndGlyphs">17:03</text>
<text x="1381" y="691" text-anchor="middle" textLength="27" lengthAdjust="spacingAndGlyphs">17:09</text>
<text x="1441" y="691" text-anchor="middle" textLength="27" lengthAdjust="spacingAndGlyphs">17:15</text>
</g>
<text x="171" y="672" textLength="124" lengthAdjust="spacingAndGlyphs">© 2016 NinjaTrader, LLC</text>

<!-- scrollbar -->
<path d="M168 701.500H1555" stroke="#cfcfcf"/>
<rect x="168.500" y="701.500" width="16" height="22" fill="#fff" stroke="#cfcfcf"/>
<path d="M179 708l-4 4.500 4 4.500" fill="none" stroke="#666" stroke-width="1.200"/>
<rect x="1489" y="702" width="48" height="22" fill="#dcdcdc"/>
<path d="M1510 708v9M1513 708v9M1516 708v9" stroke="#666" stroke-width="1.400"/>
<rect x="1538.500" y="702" width="16" height="22" fill="#fff" stroke="#cfcfcf"/>
<path d="M1544 708l4 4.500-4 4.500" fill="none" stroke="#666" stroke-width="1.200"/>
</svg>
</body></html>
